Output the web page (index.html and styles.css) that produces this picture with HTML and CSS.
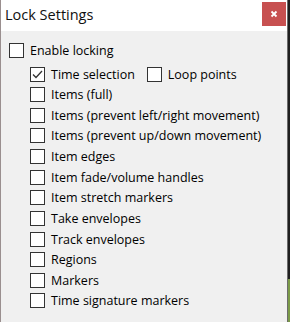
FILE: index.html
```html
<!DOCTYPE html>
<html>
<head>
<meta charset="utf-8">
<link rel="stylesheet" href="styles.css">
</head>
<body>
<div class="screen">
  <div class="window">
    <div class="titlebar">
      <span class="title">Lock Settings</span>
      <div class="close"><svg width="8" height="8" viewBox="0 0 8 8"><path d="M1.5 1.5 L6.5 6.5 M6.5 1.5 L1.5 6.5" stroke="#fff" stroke-width="1.8"/></svg></div>
    </div>
    <div class="content">
      <div class="row top"><span class="box"></span><span class="txt">Enable locking</span></div>
      <div class="sub">
        <div class="row">
          <span class="box"><svg width="13" height="13" viewBox="0 0 13 13"><path d="M2 6.5 L5 9.5 L11 3" fill="none" stroke="#333" stroke-width="1.3"/></svg></span><span class="txt">Time selection</span>
          <span class="box loopbox"></span><span class="txt">Loop points</span>
        </div>
        <div class="row"><span class="box"></span><span class="txt">Items (full)</span></div>
        <div class="row"><span class="box"></span><span class="txt">Items (prevent left/right movement)</span></div>
        <div class="row"><span class="box"></span><span class="txt">Items (prevent up/down movement)</span></div>
        <div class="row"><span class="box"></span><span class="txt">Item edges</span></div>
        <div class="row"><span class="box"></span><span class="txt">Item fade/volume handles</span></div>
        <div class="row"><span class="box"></span><span class="txt">Item stretch markers</span></div>
        <div class="row"><span class="box"></span><span class="txt">Take envelopes</span></div>
        <div class="row"><span class="box"></span><span class="txt">Track envelopes</span></div>
        <div class="row"><span class="box"></span><span class="txt">Regions</span></div>
        <div class="row"><span class="box"></span><span class="txt">Markers</span></div>
        <div class="row"><span class="box"></span><span class="txt">Time signature markers</span></div>
      </div>
    </div>
  </div>
  <div class="outside">
    <div class="dark"></div>
    <div class="green"></div>
  </div>
</div>
</body>
</html>
```
FILE: styles.css
```css
html, body {
  margin: 0;
  padding: 0;
}
body {
  width: 290px;
  height: 322px;
  overflow: hidden;
  font-family: "Open Sans", "Noto Sans", sans-serif;
  color: #000;
}
.screen {
  display: flex;
  height: 322px;
}
.window {
  width: 286px;
  height: 322px;
  border-left: 1px solid #9a8f8f;
  border-right: 1px solid #6b6b6b;
  background: #f0f0f0;
  display: flex;
  flex-direction: column;
}
.outside {
  width: 2px;
  display: flex;
  flex-direction: column;
}
.dark {
  height: 279px;
  background: #1f1f1f;
}
.green {
  flex: 1;
  background: #7b9a48;
}
.titlebar {
  height: 31px;
  flex: none;
  background: #fff;
  display: flex;
  align-items: flex-start;
  justify-content: space-between;
}
.title {
  font-size: 14.5px;
  line-height: 20px;
  margin-top: 5px;
  margin-left: 4px;
  color: #111;
}
.close {
  width: 24px;
  height: 24px;
  margin-top: 2px;
  margin-right: 1px;
  background: #c75050;
  display: flex;
  align-items: center;
  justify-content: center;
}
.content {
  padding: 11px 0 0 8px;
  font-size: 12.5px;
}
.row {
  display: flex;
  align-items: center;
  height: 20.64px;
}
.top {
  height: 17px;
}
.sub {
  padding-left: 21px;
  margin-top: 4.7px;
}
.box {
  width: 15px;
  height: 15px;
  box-sizing: border-box;
  border: 1px solid #333;
  background: #fff;
  display: flex;
  align-items: center;
  justify-content: center;
  flex: none;
}
.txt {
  margin-left: 6px;
  white-space: nowrap;
}
.loopbox {
  margin-left: 12px;
}
```
